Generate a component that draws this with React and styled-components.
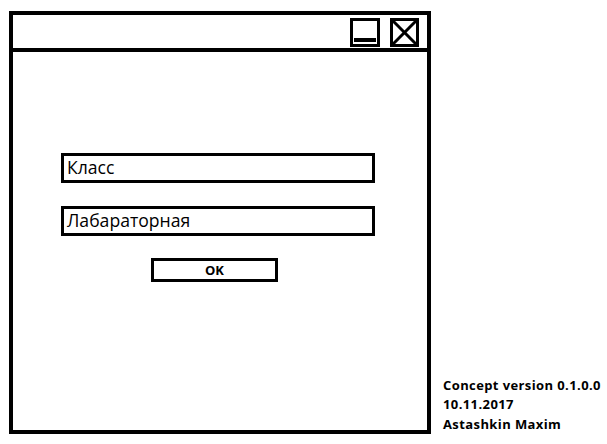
import React from "react";
import styled, { createGlobalStyle } from "styled-components";

const Global = createGlobalStyle`
  html, body { margin: 0; padding: 0; background: #fff; }
  body { font-family: "Open Sans", "DejaVu Sans", sans-serif; color: #000; }
`;

const Page = styled.div`
  display: flex;
  align-items: flex-end;
  padding: 11px 0 0 9px;
  gap: 12px;
`;

const Window = styled.div`
  box-sizing: border-box;
  width: 422px;
  height: 423px;
  border: 4px solid #000;
  display: flex;
  flex-direction: column;
`;

const TitleBar = styled.div`
  box-sizing: border-box;
  height: 37px;
  border-bottom: 4px solid #000;
  display: flex;
  justify-content: flex-end;
  align-items: flex-start;
  padding: 3px 8px 0 0;
  gap: 10px;
`;

const WinButton = styled.div`
  box-sizing: border-box;
  width: ${(p) => p.$w}px;
  height: 29px;
  border: 3px solid #000;
  position: relative;
`;

const MinBar = styled.div`
  position: absolute;
  left: 1px;
  right: 1px;
  bottom: 2px;
  height: 4px;
  background: #000;
`;

const Content = styled.div`
  display: flex;
  flex-direction: column;
  padding: 101px 0 0 48px;
`;

const Field = styled.div`
  box-sizing: border-box;
  width: 314px;
  height: 30px;
  border: 3px solid #000;
  margin-bottom: ${(p) => p.$mb}px;
  padding-left: 3px;
  display: flex;
  align-items: center;
  font-size: 17.6px;
  line-height: 1;
`;

const OkButton = styled.div`
  box-sizing: border-box;
  width: 127px;
  height: 24px;
  margin-left: 90px;
  border: 3px solid #000;
  display: flex;
  align-items: center;
  justify-content: center;
  font-weight: 700;
  font-size: 13px;
`;

const Footer = styled.div`
  font-weight: 700;
  font-size: 13px;
  letter-spacing: 0.4px;
  line-height: 19.5px;
  padding-bottom: 0;
  white-space: nowrap;
`;

export default function App() {
  return (
    <>
      <Global />
      <Page>
        <Window>
          <TitleBar>
            <WinButton $w={30}>
              <MinBar />
            </WinButton>
            <WinButton $w={29}>
              <svg width="23" height="23" viewBox="0 0 23 23" style={{ display: "block" }}>
                <line x1="0" y1="0" x2="23" y2="23" stroke="#000" strokeWidth="3" />
                <line x1="23" y1="0" x2="0" y2="23" stroke="#000" strokeWidth="3" />
              </svg>
            </WinButton>
          </TitleBar>
          <Content>
            <Field $mb={23}>Класс</Field>
            <Field $mb={22}>Лабараторная</Field>
            <OkButton>OK</OkButton>
          </Content>
        </Window>
        <Footer>
          Concept version 0.1.0.0
          <br />
          10.11.2017
          <br />
          Astashkin Maxim
        </Footer>
      </Page>
    </>
  );
}
